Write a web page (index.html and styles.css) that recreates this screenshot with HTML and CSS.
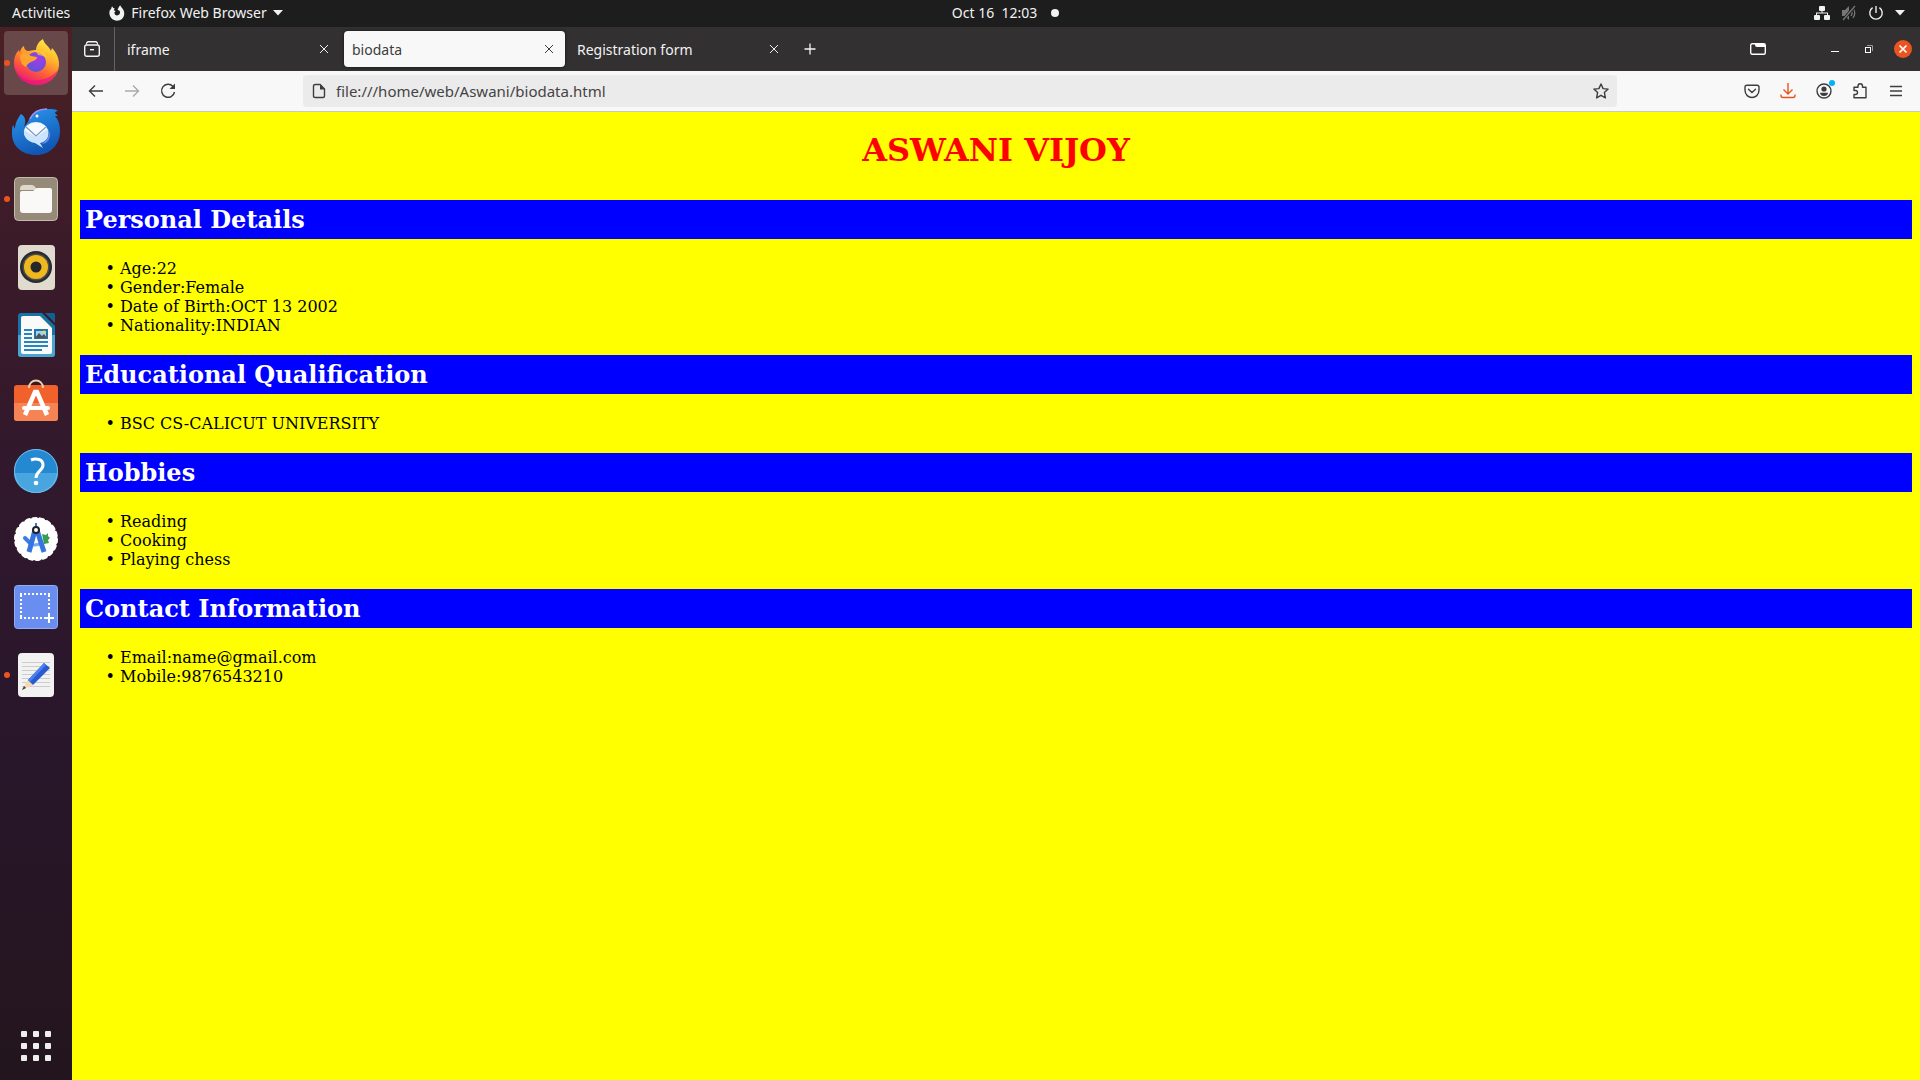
FILE: index.html
```html
<!DOCTYPE html>
<html lang="en">
<head>
<meta charset="utf-8">
<title>biodata</title>
<link rel="stylesheet" href="styles.css">
</head>
<body>
<header class="panel">
  <div class="panel-left">
    <button class="panel-btn">Activities</button>
    <button class="panel-btn app-menu">
      <svg width="16" height="16" viewBox="0 0 16 16"><path fill="#f2f2f2" d="M3 1.200 4.300 3 5.600 3.200 4.800 5.200 6.600 5.900 5.500 7.300C5.200 9.200 6.500 10.400 8.100 10.400C10 10.400 11.200 9 11 7.200C10.900 5.600 9.800 4.900 8.600 5C9 3.200 10 1.500 11.200.300C11.700 2 13 2.700 14 4.200C16 7.400 15.600 11.600 12.900 13.900C10 16.300 5.500 16.200 2.700 13.600C.200 11.200-.300 7.200 1.200 4.200L1.700 5Z"/></svg>
      <span>Firefox Web Browser</span>
      <svg width="10" height="6" viewBox="0 0 10 6"><path fill="#f2f2f2" d="M0 0h10L5 5.500z"/></svg>
    </button>
  </div>
  <div class="clock"><span class="clock-side"></span><time>Oct 16&nbsp; 12:03</time><span class="clock-side"><i class="notice"></i></span></div>
  <button class="panel-btn status" aria-label="System menu">
    <svg width="16" height="16" viewBox="0 0 16 16" fill="#f2f2f2"><rect x="5" y="1" width="6" height="5" rx="1"/><rect y="10" width="6" height="5" rx="1"/><rect x="10" y="10" width="6" height="5" rx="1"/><path d="M7.500 5h1v2.500H14V10h-1V8.500H3V10H2V7.500h5.500z"/></svg>
    <svg width="16" height="16" viewBox="0 0 16 16" fill="none" stroke="#777"><path fill="#777" stroke="none" d="M1 5h3l4-4v14l-4-4H1z"/><path d="M10 5q2 3 0 6M12 3q3.500 5 0 10" stroke-width="1.300"/><path stroke="#1d1d1d" stroke-width="3" d="M2 15 14 1"/><path stroke-width="1.300" d="M2 15 14 1"/></svg>
    <svg width="16" height="16" viewBox="0 0 16 16" fill="none" stroke="#eee" stroke-width="1.400"><path d="M4.600 2.700a6.200 6.200 0 1 0 6.800 0M8 1v7"/></svg>
    <svg width="10" height="6" viewBox="0 0 10 6"><path fill="#f2f2f2" d="M0 0h10L5 5.500z"/></svg>
  </button>
</header>

<div class="desktop">
<nav class="dock" aria-label="Dock">
  <button class="tile running current" aria-label="Firefox">
    <svg viewBox="0 0 64 64">
      <defs>
        <linearGradient id="fx" x1=".8" y1="0" x2=".3" y2="1"><stop offset="0" stop-color="#fff04a"/><stop offset=".35" stop-color="#ffb52c"/><stop offset=".65" stop-color="#ff6335"/><stop offset="1" stop-color="#e9127c"/></linearGradient>
        <radialGradient id="globe" cx=".6" cy=".35" r=".7"><stop offset="0" stop-color="#a43be8"/><stop offset="1" stop-color="#5b55d8"/></radialGradient>
      </defs>
      <path fill="url(#fx)" d="M39 8c1 5 6 7 8 12l1-3c5 5 7 11 7 16 0 12-10 21-22 21S10 45 10 32c0-6 2-10 5-13l1 3c0-3 2-6 4-7 0 3 2 5 5 5 3-1 5-1 7-1 0-4 3-9 7-11z"/>
      <path fill="#e8157d" opacity=".7" d="M11 38c5 10 14 13 24 11 9-1 15-5 19-10-3 9-11 15-21 15s-19-6-22-16z"/>
      <circle cx="32" cy="31" r="10" fill="url(#globe)"/>
      <path fill="#ffa42e" d="M16 24c3-3 8-2 11 1l6 1c0 3-4 4-6 5-3 1-4 3-5 5-5-2-6-8-6-12z"/>
      <path fill="#ffcf38" d="M31 20c6-1 11 2 12 7-3-2-7-3-9-3-1-2-2-3-3-4z" opacity=".7"/>
    </svg>
  </button>
  <button class="tile" aria-label="Thunderbird">
    <svg viewBox="0 0 64 64">
      <defs><linearGradient id="tb" x1="0" y1="0" x2=".4" y2="1"><stop offset="0" stop-color="#2c9bf0"/><stop offset="1" stop-color="#1057b5"/></linearGradient></defs>
      <path fill="url(#tb)" d="M17 15c5 3 5 8 3 13l4-5c3-10 12-14 20-13 4 0 8 0 10 2-2 0-3 1-3 2l3 3h-3c4 5 5 9 5 15 0 14-10 24-24 24C18 56 8 47 8 35c0-4 0-6 1-9l2 4c0-6 3-11 6-15z"/>
      <path fill="none" stroke="#a48bf0" stroke-width="1.500" d="M26 20c3-7 10-10 17-10"/>
      <circle cx="33" cy="17" r="1.500" fill="#fff"/>
      <ellipse cx="32" cy="33" rx="12" ry="10" fill="#f4faff"/><path fill="#cbe5ff" d="m20 31 12 7 12-8c2 8-2 13-8 14l3 5-8-5c-7-1-12-6-11-13z"/>
      <path fill="none" stroke="#8498b8" stroke-width="1.200" d="m22 28 10 9 10-9"/>
      <path fill="#6f87ec" d="M46 32c-1 6-4 10-8 13 6-1 9-5 8-13z"/>
    </svg>
  </button>
  <button class="tile running" aria-label="Files">
    <svg viewBox="0 0 64 64"><rect x="10.500" y="10.500" width="43" height="43" rx="4" fill="#958b78" stroke="#c3bcae"/><path fill="#ded8c8" d="M16 22q0-4 4-4h8q2 0 4 3l2 2H16z"/><path fill="#faf9f7" d="M16 26q0-2 2-2h11l4-3h13q2 0 2 2v20q0 3-3 3H19q-3 0-3-3z"/></svg>
  </button>
  <button class="tile" aria-label="Rhythmbox">
    <svg viewBox="0 0 64 64"><rect x="14" y="10" width="37" height="45" rx="4" fill="#e1dacf"/><circle cx="32" cy="32" r="16" fill="#292b30"/><circle cx="32" cy="32" r="13.500" fill="#4d4d4d"/><circle cx="32" cy="32" r="12" fill="#f0b81f"/><circle cx="32" cy="32" r="5.500" fill="#25272a"/></svg>
  </button>
  <button class="tile" aria-label="LibreOffice Writer">
    <svg viewBox="0 0 64 64"><path fill="#1673a6" d="M17 10h21l13 13v28q0 3-3 3H17q-3 0-3-3V13q0-3 3-3z"/><path fill="#4aa4d2" d="M14 32h37v19q0 3-3 3H17q-3 0-3-3z"/><path fill="#fafafa" d="M19 13h17l12 12v24q0 2-2 2H19q-2 0-2-2V15q0-2 2-2z"/><path fill="#116292" d="M41 10h8q2 0 2 2v8z"/><path stroke="#2786bd" stroke-width="2" d="M20 27h8m-8 4h8m-8 4h8m-8 4h24m-24 4h24m-24 4h18"/><rect x="31" y="27" width="12" height="8" fill="#9bd4f5" stroke="#2176a9" stroke-width="2"/><path fill="#515151" d="m31 35 4-5 3 3 2-2 3 4z"/><circle cx="40" cy="29" r="1.500" fill="#ffd43b"/></svg>
  </button>
  <button class="tile" aria-label="Ubuntu Software">
    <svg viewBox="0 0 64 64"><rect x="10" y="14" width="44" height="36" rx="3" fill="#f1612c"/><path fill="#f58354" d="M10 32h44v15q0 3-3 3H13q-3 0-3-3z"/><path fill="none" stroke="#e9cfaa" stroke-width="2" d="M25 17c0-10 14-10 14 0"/><path fill="none" stroke="#fff" stroke-width="4.500" d="m21 44 10-23h2l10 23"/><path stroke="#fff" stroke-width="4" stroke-linecap="round" d="M20 37h24"/></svg>
  </button>
  <button class="tile" aria-label="Help">
    <svg viewBox="0 0 64 64"><circle cx="32" cy="32" r="22" fill="#2589d1"/><path fill="#48a5df" d="M10 34h44a22 20 0 0 1-44 0z"/><circle cx="32" cy="32" r="21.500" fill="none" stroke="#72bce9"/><path fill="none" stroke="#fff" stroke-width="3" d="M27 21c5-2 12-1 12 5 0 6-7 6-7 13"/><circle cx="32" cy="44" r="2.300" fill="#fff"/></svg>
  </button>
  <button class="tile" aria-label="Android Studio">
    <svg viewBox="0 0 64 64"><circle cx="32" cy="32" r="21" fill="#fff"/><circle cx="32" cy="32" r="20" fill="none" stroke="#fff" stroke-width="4" stroke-linecap="round" stroke-dasharray="3 3.980"/><path fill="#399d50" d="m38 27 4 1 2-2v3l2 2-2 2 1 3-5 1z"/><path stroke="#3c7de2" stroke-width="4" stroke-linecap="round" d="m21 31 5 5"/><path fill="none" stroke="#75aaf7" stroke-width="3" d="M25 37c6 2 10 1 14-2"/><path stroke="#3674df" stroke-width="5" d="m31 23-6 22m8-22 7 22"/><path stroke="#3674df" stroke-width="2" d="M32 16v4"/><circle cx="32" cy="23" r="3" fill="#fff" stroke="#202124" stroke-width="2"/></svg>
  </button>
  <button class="tile" aria-label="Screenshot">
    <svg viewBox="0 0 64 64"><rect x="10.500" y="10.500" width="43" height="43" rx="3" fill="#698ef0" stroke="#92acf5"/><path fill="none" stroke="#fff" stroke-width="2" stroke-dasharray="2 2" d="M16 19h30M17 20v24M16 43h24M45 20v16"/><path stroke="#fff" stroke-width="2" d="M40 43h10m-5-5v10"/></svg>
  </button>
  <button class="tile running" aria-label="Text Editor">
    <svg viewBox="0 0 64 64"><rect x="14" y="10" width="36" height="44" rx="4" fill="#f2f2f2"/><path stroke="#ccc" d="M18 19.500h28m-28 4h28m-28 4h28m-28 4h28m-28 4h28m-28 4h28m-28 4h28"/><path fill="#f7d7b0" d="m18 47 6-10 5 5z"/><path fill="#383838" d="m18 47 2-4 2 2z"/><path fill="#285bd1" d="m40 20 6 5-17 17-5-5z"/><path fill="#4c80ef" d="m40 20 2 2-16 17-2-2z"/></svg>
  </button>
  <button class="tile apps" aria-label="Show Applications">
    <svg viewBox="0 0 64 64" fill="#eeeeec"><rect x="17" y="17" width="6" height="6" rx="1"/><rect x="29" y="17" width="6" height="6" rx="1"/><rect x="41" y="17" width="6" height="6" rx="1"/><rect x="17" y="29" width="6" height="6" rx="1"/><rect x="29" y="29" width="6" height="6" rx="1"/><rect x="41" y="29" width="6" height="6" rx="1"/><rect x="17" y="41" width="6" height="6" rx="1"/><rect x="29" y="41" width="6" height="6" rx="1"/><rect x="41" y="41" width="6" height="6" rx="1"/></svg>
  </button>
</nav>

<section class="browser">
  <div class="tabbar">
    <button class="view" aria-label="Firefox View"><svg width="16" height="16" viewBox="0 0 16 16" fill="none" stroke="#f5f5f5" stroke-width="1.400"><path d="M1 3.500Q1 .700 3.500.700h9Q15 .700 15 3.500" transform="translate(1.600 0) scale(.8 1)"/><rect x=".7" y="4" width="14.600" height="11.300" rx="2"/><path d="M6 8.700h4"/></svg></button>
    <div class="tab"><button class="tab-name">iframe</button><button class="tab-close" aria-label="Close iframe"><svg width="10" height="10" viewBox="0 0 10 10"><path d="m1 1 8 8m0-8L1 9"/></svg></button></div>
    <div class="tab selected"><button class="tab-name">biodata</button><button class="tab-close" aria-label="Close biodata"><svg width="10" height="10" viewBox="0 0 10 10"><path d="m1 1 8 8m0-8L1 9"/></svg></button></div>
    <div class="tab"><button class="tab-name">Registration form</button><button class="tab-close" aria-label="Close Registration form"><svg width="10" height="10" viewBox="0 0 10 10"><path d="m1 1 8 8m0-8L1 9"/></svg></button></div>
    <button class="new-tab" aria-label="New tab"><svg width="12" height="12" viewBox="0 0 12 12"><path stroke="#f5f5f5" stroke-width="1.300" d="M6 .500v11M.500 6h11"/></svg></button>
    <div class="window-tools">
      <button class="list-tabs" aria-label="List tabs"><svg width="16" height="12" viewBox="0 0 16 12"><rect x=".7" y=".7" width="14.600" height="10.600" rx="1.500" fill="none" stroke="#fff" stroke-width="1.400"/><path fill="#fff" d="M5 1h10v3H7Q5 4 5 2z"/></svg></button>
      <button class="win" aria-label="Minimize"><svg width="16" height="16" viewBox="0 0 16 16"><path stroke="#fff" d="M4 10.500h8"/></svg></button>
      <button class="win" aria-label="Restore"><svg width="16" height="16" viewBox="0 0 16 16" fill="none"><path stroke="#999" d="M6 4.500h5.500V10"/><rect x="4.500" y="6.500" width="5" height="5" stroke="#fff"/></svg></button>
      <button class="win" aria-label="Close"><svg width="18" height="18" viewBox="0 0 18 18"><circle cx="9" cy="9" r="9" fill="#e95420"/><path stroke="#fff" stroke-width="1.700" d="m5.500 5.500 7 7m0-7-7 7"/></svg></button>
    </div>
  </div>

  <div class="toolbar">
    <button class="tool" aria-label="Back"><svg viewBox="0 0 16 16"><path d="M15 8H1.500M7 2.500 1.500 8 7 13.500"/></svg></button>
    <button class="tool disabled" aria-label="Forward" disabled><svg viewBox="0 0 16 16"><path d="M1 8h13.500M9 2.500 14.500 8 9 13.500"/></svg></button>
    <button class="tool" aria-label="Reload"><svg viewBox="0 0 16 16"><path d="M13 3.500A6.500 6.500 0 1 0 14.500 9"/><path class="solid" d="M15 .500v5.500H9.500z"/></svg></button>
    <span class="spring"></span>
    <div class="urlbar">
      <svg class="line" viewBox="0 0 16 16"><path d="M4.500 1.500H9l4.500 4.500v7q0 1.500-1.500 1.500H4.500Q2.500 14.500 2.500 13V3q0-1.500 2-1.500z"/><path class="solid" d="M9 1v5.500h5z"/></svg>
      <input class="url" type="text" aria-label="Address" value="file:///home/web/Aswani/biodata.html">
      <button class="star" aria-label="Bookmark"><svg class="line" viewBox="0 0 16 16"><path stroke-linejoin="round" d="m8 1 2.100 4.600 5 .500-3.700 3.500 1 5.200L8 12.300l-4.400 2.500 1-5.200L.900 6.100l5-.500z"/></svg></button>
    </div>
    <span class="spring"></span>
    <button class="tool" aria-label="Pocket"><svg viewBox="0 0 16 16"><path d="M3 2.200h10q2 0 2 2V7c0 10-14 10-14 0V4.200q0-2 2-2z"/><path stroke-linecap="round" d="m4.500 6.200 3.500 3.300 3.500-3.300"/></svg></button>
    <button class="tool downloads" aria-label="Downloads"><svg viewBox="0 0 16 16"><path d="M8 0v11M3.500 6.500 8 11l4.500-4.500M1 11.500v1q0 2 2 2h10q2 0 2-2v-1"/></svg></button>
    <button class="tool account" aria-label="Account"><svg viewBox="0 0 16 16"><circle cx="8" cy="8" r="7"/><circle class="solid" cx="8" cy="6" r="2.600"/><path class="solid" d="M4 9.800h8q-.500 3.200-4 3.200t-4-3.200z"/></svg></button>
    <button class="tool" aria-label="Extensions"><svg viewBox="0 0 16 16"><path stroke-linejoin="round" d="M2 4.200h4V3a2 2 0 0 1 4.500 0v1.200H14v10.600H2V11.500h1.500a2 2 0 0 0 0-4H2z"/></svg></button>
    <button class="tool" aria-label="Menu"><svg viewBox="0 0 16 16"><path d="M2 3.500h12M2 8h12M2 12.500h12"/></svg></button>
  </div>

  <main class="page">
    <h1>ASWANI VIJOY</h1>
    <h2>Personal Details</h2>
    <ul><li>Age:22</li><li>Gender:Female</li><li>Date of Birth:OCT 13 2002</li><li>Nationality:INDIAN</li></ul>
    <h2>Educational Qualification</h2>
    <ul><li>BSC CS-CALICUT UNIVERSITY</li></ul>
    <h2>Hobbies</h2>
    <ul><li>Reading</li><li>Cooking</li><li>Playing chess</li></ul>
    <h2>Contact Information</h2>
    <ul><li>Email:name@gmail.com</li><li>Mobile:9876543210</li></ul>
  </main>
</section>
</div>
</body>
</html>
```
FILE: styles.css
```css
* { box-sizing: border-box; }

body {
  margin: 0;
  min-height: 100vh;
  display: flex;
  flex-direction: column;
  font: 14px/20px "Noto Sans", "Open Sans", sans-serif;
  color: #f2f2f2;
}

button {
  margin: 0;
  padding: 0;
  border: 0;
  background: none;
  color: inherit;
  font: inherit;
}

svg { display: block; flex: none; }

/* Top panel */
.panel {
  display: grid;
  grid-template-columns: 1fr auto 1fr;
  align-items: center;
  height: 27px;
  padding: 0 15px 1px 12px;
  background: #1d1d1d;
}
.panel-left { display: flex; gap: 39px; }
.panel-btn { display: flex; align-items: center; }
.app-menu { gap: 6px; }
.clock { display: flex; align-items: center; margin-left: 72px; }
.clock-side { width: 22px; display: flex; justify-content: flex-end; }
.notice { width: 8px; height: 8px; border-radius: 50%; background: #f2f2f2; }
.status { justify-self: end; gap: 11px; }

.desktop { flex: 1; display: flex; }

/* Dock */
.dock {
  flex: none;
  width: 72px;
  padding: 4px 4px 2px;
  display: flex;
  flex-direction: column;
  gap: 4px;
  background: linear-gradient(#4a2024, #3c1b29 20%, #30182d 45%, #28162a 70%, #23151d);
}
.tile { position: relative; width: 64px; height: 64px; border-radius: 4px; }
.current { background: #684849; }
.running::before {
  content: "";
  position: absolute;
  left: 0;
  top: 29px;
  width: 6px;
  height: 6px;
  border-radius: 50%;
  background: #e95420;
}
.apps { margin-top: auto; }

/* Browser window */
.browser { flex: 1; min-width: 0; display: flex; flex-direction: column; }

.tabbar {
  display: flex;
  align-items: center;
  height: 44px;
  padding-right: 8px;
  background: #323031;
}
.view {
  display: grid;
  place-items: center;
  width: 43px;
  height: 44px;
  margin-right: 2px;
  padding-right: 2px;
  border-right: 1px solid #656364;
}
.tab {
  display: flex;
  align-items: center;
  width: 221px;
  height: 36px;
  margin: 0 2px;
  padding: 0 9px 0 8px;
  border-radius: 4px;
}
.selected { background: #f8f8f8; color: #3d3d3d; box-shadow: 0 0 3px #111; }
.tab-name { flex: 1; padding-top: 2px; text-align: left; }
.tab-close { padding: 2px; }
.tab-close path { stroke: currentColor; stroke-width: 1; }
.new-tab { padding: 12px; }
.window-tools { display: flex; align-items: center; margin-left: auto; }
.list-tabs { margin-right: 52px; }
.win { display: grid; place-items: center; width: 34px; height: 34px; }
.win:last-child { width: 18px; margin-left: 8px; }

.toolbar {
  display: flex;
  align-items: center;
  height: 41px;
  padding: 0 6px;
  background: #f8f8f8;
  border-bottom: 1px solid #c8c8c8;
  color: #3d3d3d;
}
.tool { position: relative; display: grid; place-items: center; width: 36px; height: 32px; }
.tool svg, .line { width: 16px; height: 16px; fill: none; stroke: currentColor; stroke-width: 1.4; }
.tool .solid, .line .solid { fill: currentColor; stroke: none; }
.disabled { color: #aaa; }
.downloads { color: #e95420; }
.account::after {
  content: "";
  position: absolute;
  right: 7px;
  top: 5px;
  width: 6px;
  height: 6px;
  border-radius: 50%;
  background: #00b3f4;
}
.spring { flex: 0 1 117px; }
.urlbar {
  flex: 1;
  display: flex;
  align-items: center;
  gap: 9px;
  height: 32px;
  padding: 0 8px;
  border-radius: 4px;
  background: #ebebeb;
}
.url {
  flex: 1;
  min-width: 0;
  padding: 0;
  border: 0;
  outline: 0;
  background: none;
  color: #444;
  font: inherit;
  font-size: 15px;
}

/* Document */
.page {
  flex: 1;
  padding: 20px 8px;
  background: #ff0;
  color: #000;
  font: 16px/19px "DejaVu Serif", serif;
}
.page h1 {
  margin: 0 0 31px;
  color: #f00;
  font-size: 32px;
  line-height: 37px;
  text-align: center;
}
.page h2 {
  margin: 0;
  padding: 5px;
  background: #00f;
  color: #fff;
  font-size: 24px;
  line-height: 29px;
}
.page ul { margin: 20px 0; padding-left: 40px; list-style-type: "• "; }
```
